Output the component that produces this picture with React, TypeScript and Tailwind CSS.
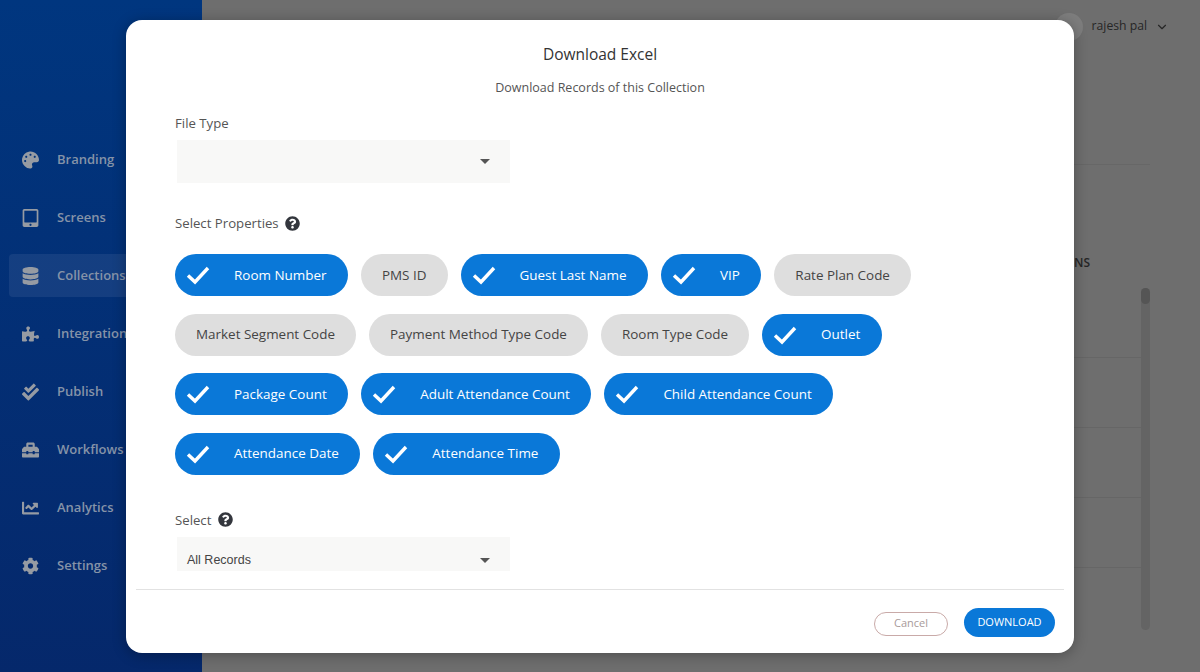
import type { ReactNode } from "react";
import {
  FaChartLine,
  FaCheckDouble,
  FaCog,
  FaDatabase,
  FaPalette,
  FaPuzzlePiece,
  FaQuestionCircle,
  FaTabletAlt,
  FaToolbox,
} from "react-icons/fa";
import { ChevronDown, Menu } from "lucide-react";

const NAV_ITEMS = [
  { label: "Branding", icon: <FaPalette /> },
  { label: "Screens", icon: <FaTabletAlt /> },
  { label: "Collections", icon: <FaDatabase />, active: true },
  { label: "Integrations", icon: <FaPuzzlePiece /> },
  { label: "Publish", icon: <FaCheckDouble /> },
  { label: "Workflows & Jobs", icon: <FaToolbox /> },
  { label: "Analytics", icon: <FaChartLine /> },
  { label: "Settings", icon: <FaCog /> },
];

const CHIP_ROWS = [
  [
    { label: "Room Number", on: true },
    { label: "PMS ID" },
    { label: "Guest Last Name", on: true },
    { label: "VIP", on: true },
    { label: "Rate Plan Code" },
  ],
  [
    { label: "Market Segment Code" },
    { label: "Payment Method Type Code" },
    { label: "Room Type Code" },
    { label: "Outlet", on: true },
  ],
  [
    { label: "Package Count", on: true },
    { label: "Adult Attendance Count", on: true },
    { label: "Child Attendance Count", on: true },
  ],
  [
    { label: "Attendance Date", on: true },
    { label: "Attendance Time", on: true },
  ],
];

function Chip({ label, on }: { label: string; on?: boolean }) {
  if (!on) {
    return (
      <div className="flex h-[42px] items-center rounded-full bg-[#dedede] px-[21px] text-[13.45px] text-[#444]">
        {label}
      </div>
    );
  }
  return (
    <div className="flex h-[42px] items-center rounded-full bg-[#0a78d8] pl-[11px] pr-[21.5px] text-[13.45px] text-white">
      <svg width="24" height="20" viewBox="0 0 24 20" className="mr-[24px]" fill="none">
        <path d="M2 10.5 L9 17 L22 3" stroke="white" strokeWidth="3.4" />
      </svg>
      {label}
    </div>
  );
}

function FakeSelect({ className, children }: { className: string; children?: ReactNode }) {
  return (
    <div className={`ml-[2px] flex w-[333px] items-center justify-between bg-[#f8f8f7] pl-[10px] pr-[20px] ${className}`}>
      <span className="font-['Liberation_Sans',sans-serif] text-[12.5px] text-[#444]">{children}</span>
      <span className="h-0 w-0 border-x-[5px] border-t-[5px] border-x-transparent border-t-[#555]" />
    </div>
  );
}

function Sidebar() {
  return (
    <aside className="flex w-[202px] shrink-0 flex-col bg-gradient-to-b from-[#00367f] to-[#05286b] pl-[9px] pt-[138px]">
      {NAV_ITEMS.map((item) => (
        <div
          key={item.label}
          className={`mb-[15px] flex h-[43px] items-center gap-[18px] rounded-l-[4px] pl-[13px] text-[13px] font-semibold text-[#8593a8] ${
            item.active ? "bg-white/[0.07]" : ""
          }`}
        >
          <span className="flex w-[17px] justify-center text-[18px] text-[#969ba3]">{item.icon}</span>
          <span className="whitespace-nowrap">{item.label}</span>
        </div>
      ))}
    </aside>
  );
}

function Backdrop() {
  return (
    <main className="flex min-w-0 flex-1 flex-col bg-[#6e6e6e] text-[#262626]">
      <header className="flex h-[53px] items-center justify-between pl-[17px] pr-[31px]">
        <Menu size={18} className="text-[#222]" />
        <div className="flex items-center text-[12.2px]">
          <span className="mr-[9px] h-[28px] w-[28px] rounded-full bg-[#7d7d7d]" />
          <span>rajesh pal</span>
          <ChevronDown size={14} className="ml-[8px]" />
        </div>
      </header>
      <div className="flex flex-1 flex-col pl-[30px] pr-[50px]">
        <div className="h-[112px] border-b border-[#676767]" />
        <div className="pr-[60px] pt-[92px] text-right text-[12px] font-semibold leading-none">ACTIONS</div>
        <div className="mb-[42px] mt-[19px] flex flex-1">
          <div className="flex flex-1 flex-col">
            <div className="h-[70px] border-b border-[#666]" />
            <div className="h-[70px] border-b border-[#666]" />
            <div className="h-[70px] border-b border-[#666]" />
            <div className="h-[70px] border-b border-[#666]" />
          </div>
          <div className="w-[9px] rounded-full bg-[#646464]">
            <div className="h-[16px] rounded-full bg-[#555]" />
          </div>
        </div>
      </div>
    </main>
  );
}

function HelpIcon() {
  return <FaQuestionCircle className="text-[15px] text-[#33363d]" />;
}

function DownloadModal() {
  return (
    <div className="absolute inset-0 flex items-start justify-center pt-5">
      <div className="flex h-[633px] w-[948px] flex-col rounded-[16px] bg-white shadow-[0_2px_14px_rgba(0,0,0,0.3)]">
        <div className="flex-1 px-[49px] pt-[22px] text-[#555]">
          <h2 className="text-center text-[15.5px] font-medium leading-[24px] text-[#333]">Download Excel</h2>
          <p className="mt-[13px] text-center text-[12.5px] leading-[18px] text-[#555]">
            Download Records of this Collection
          </p>
          <div className="mt-[16px] text-[13.2px] leading-[20px]">File Type</div>
          <div className="mt-[7px]">
            <FakeSelect className="h-[43px]" />
          </div>
          <div className="mt-[30px] flex items-center gap-[6px] text-[13.2px] leading-[20px]">
            Select Properties
            <HelpIcon />
          </div>
          <div className="mt-[21px] flex flex-col gap-[17.5px]">
            {CHIP_ROWS.map((row, i) => (
              <div key={i} className="flex gap-[13px]">
                {row.map((chip) => (
                  <Chip key={chip.label} label={chip.label} on={chip.on} />
                ))}
              </div>
            ))}
          </div>
          <div className="mt-[35px] flex items-center gap-[7px] text-[13.2px] leading-[20px]">
            Select
            <HelpIcon />
          </div>
          <div className="mt-[7px]">
            <FakeSelect className="h-[34px] pt-[14px]">All Records</FakeSelect>
          </div>
        </div>
        <div className="mx-[10px] flex h-[64px] items-center justify-end gap-[16px] border-t border-[#e2e2e2] pr-[9px] pt-[2px]">
          <button
            type="button"
            className="mt-[2px] h-[24px] w-[74px] rounded-full border border-[#c9aaa8] text-[11px] text-[#a89a9a]"
          >
            Cancel
          </button>
          <button
            type="button"
            className="h-[29px] w-[91px] rounded-full bg-[#0a78d8] text-[11px] text-white"
          >
            DOWNLOAD
          </button>
        </div>
      </div>
    </div>
  );
}

export default function App() {
  return (
    <div className="relative flex h-[672px] w-[1200px] overflow-hidden font-['Open_Sans',sans-serif]">
      <Sidebar />
      <Backdrop />
      <DownloadModal />
    </div>
  );
}
